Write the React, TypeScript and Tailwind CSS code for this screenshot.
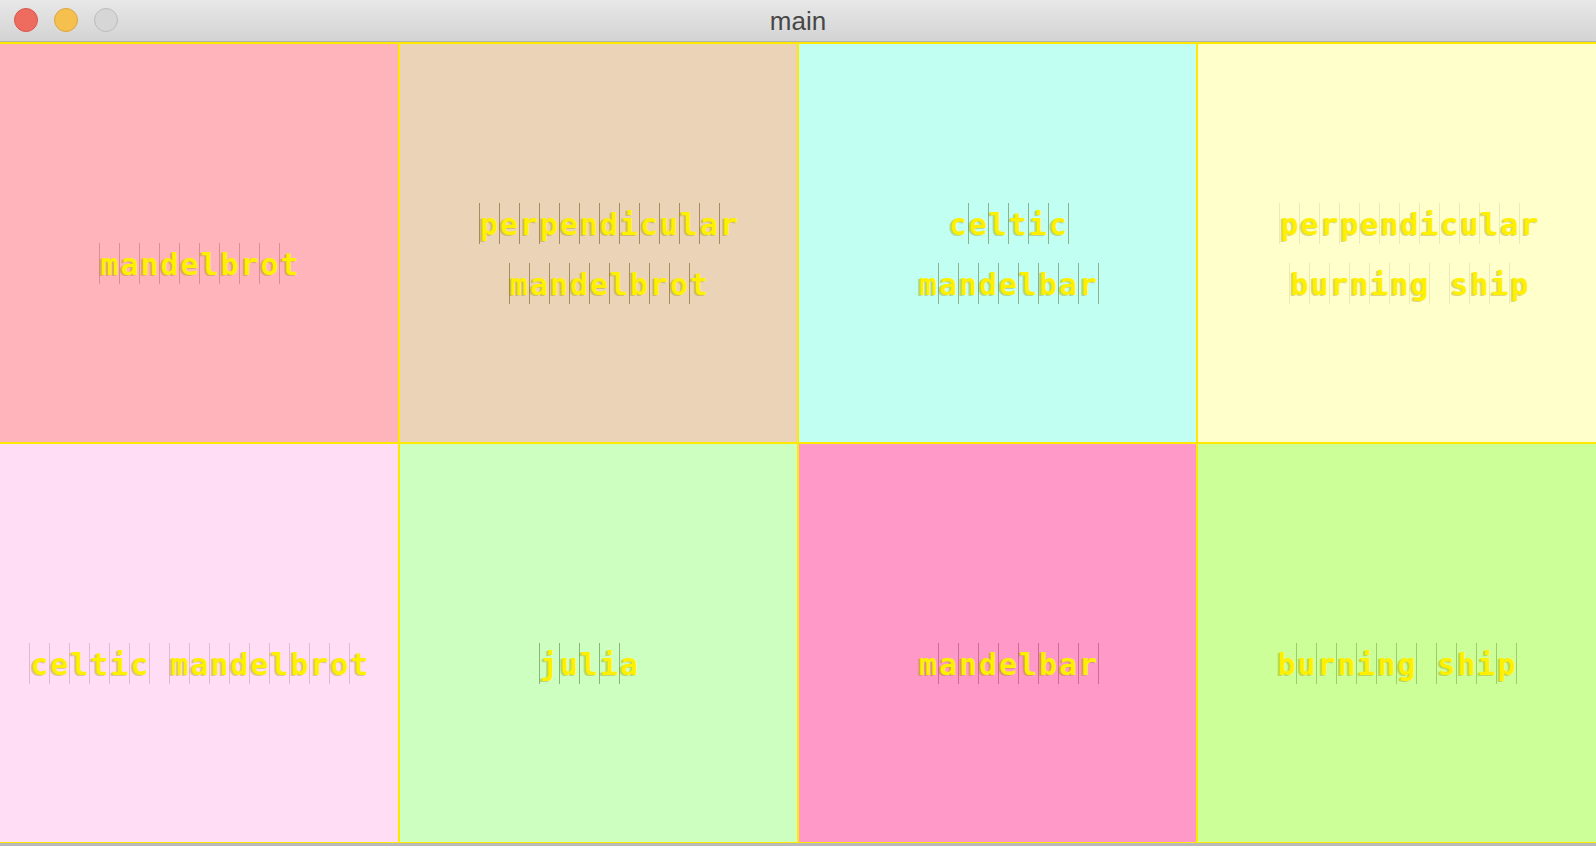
import React from "react";

type Cell = {
  bg: string;
  lines: string[];
  side: "l" | "r";
  lineColor: string;
  nudge: string;
};

const cells: Cell[] = [
  { bg: "bg-[#ffb3ba]", lines: ["mandelbrot"], side: "l", lineColor: "border-[rgba(120,60,60,0.3)]", nudge: "" },
  { bg: "bg-[#ead3b6]", lines: ["perpendicular", "mandelbrot"], side: "l", lineColor: "border-[rgba(110,80,20,0.55)]", nudge: "ml-[20px]" },
  { bg: "bg-[#c0fff2]", lines: ["celtic", "mandelbar"], side: "r", lineColor: "border-[rgba(90,100,40,0.5)]", nudge: "ml-[22px]" },
  { bg: "bg-[#ffffcc]", lines: ["perpendicular", "burning ship"], side: "l", lineColor: "border-[rgba(120,120,60,0.15)]", nudge: "ml-[24px]" },
  { bg: "bg-[#ffddf4]", lines: ["celtic mandelbrot"], side: "l", lineColor: "border-[rgba(120,60,100,0.22)]", nudge: "" },
  { bg: "bg-[#ccffc0]", lines: ["julia"], side: "l", lineColor: "border-[rgba(60,90,30,0.45)]", nudge: "mr-[20px]" },
  { bg: "bg-[#ff99c8]", lines: ["mandelbar"], side: "r", lineColor: "border-[rgba(110,50,60,0.4)]", nudge: "ml-[22px]" },
  { bg: "bg-[#ccff98]", lines: ["burning ship"], side: "r", lineColor: "border-[rgba(70,110,30,0.35)]", nudge: "" },
];

function TextLine({ text, side, lineColor }: { text: string; side: "l" | "r"; lineColor: string }) {
  return (
    <div className="flex h-[41px]">
      {text.split("").map((ch, i) => (
        <span
          key={i}
          className={
            "inline-block h-[41px] w-[20px] pt-[3px] text-center leading-[38px] " +
            (side === "l" ? "border-l " : "border-r ") +
            lineColor
          }
        >
          {ch === " " ? "\u00a0" : ch}
        </span>
      ))}
    </div>
  );
}

export default function App() {
  return (
    <div className="h-[846px] w-[1596px] overflow-hidden bg-[#cfcfcf] font-['Liberation_Sans',sans-serif]">
      {/* title bar */}
      <div className="relative flex h-[42px] items-center justify-center border-b border-[#b3b3b3] bg-gradient-to-b from-[#e8e8e8] to-[#d3d3d3]">
        <div className="absolute left-[14px] top-[8px] flex gap-[16px]">
          <div className="h-[24px] w-[24px] rounded-full border border-[#d9564b] bg-[#ee6b60]" />
          <div className="h-[24px] w-[24px] rounded-full border border-[#dba53f] bg-[#f6c04f]" />
          <div className="h-[24px] w-[24px] rounded-full border border-[#bcbcbc] bg-[#d6d6d6]" />
        </div>
        <span className="text-[26px] leading-none text-[#474747]">main</span>
      </div>
      {/* grid */}
      <div className="grid h-[801px] grid-cols-4 grid-rows-2 border-t border-[#ffe900]">
        {cells.map((c, idx) => (
          <div
            key={idx}
            className={
              "flex items-center justify-center border border-[#ffe900] " +
              (idx % 4 === 0 ? "border-l-0 " : "") +
              (idx % 4 === 3 ? "border-r-0 " : "") +
              c.bg
            }
          >
            <div
              className={
                "flex flex-col items-center gap-[19px] font-['DejaVu_Sans_Mono',monospace] text-[30px] font-bold text-[#fff000] [text-shadow:-2px_1px_0_rgba(150,140,0,0.35)] " +
                (c.lines.length === 1 ? "pt-[40px] " : "pt-[20px] ") +
                c.nudge
              }
            >
              {c.lines.map((l, i) => (
                <TextLine key={i} text={l} side={c.side} lineColor={c.lineColor} />
              ))}
            </div>
          </div>
        ))}
      </div>
      <div className="h-[3px] bg-[#b9b9b9]" />
    </div>
  );
}
